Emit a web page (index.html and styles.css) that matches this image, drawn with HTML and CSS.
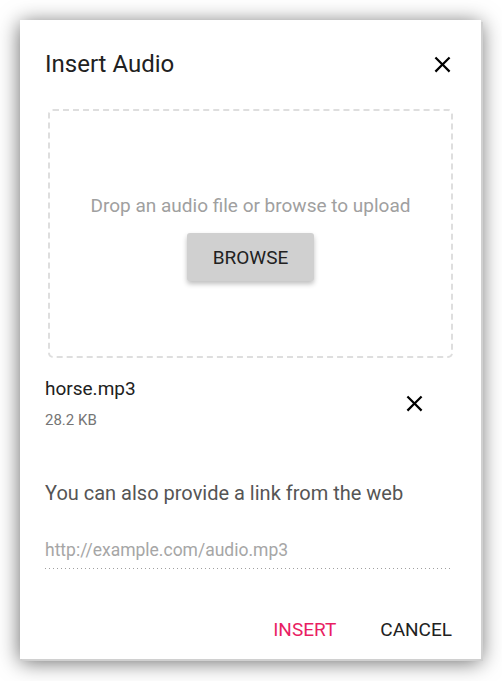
FILE: index.html
```html
<!DOCTYPE html>
<html>
<head>
<meta charset="utf-8">
<link rel="stylesheet" href="styles.css">
</head>
<body>
<div class="dialog">
  <div class="header">
    <h1 class="title">Insert Audio</h1>
    <button class="icon-btn close">
      <svg width="27" height="27" viewBox="0 0 24 24"><path d="M19 6.41L17.59 5 12 10.59 6.41 5 5 6.41 10.59 12 5 17.59 6.41 19 12 13.41 17.59 19 19 17.59 13.41 12z" fill="#000"/></svg>
    </button>
  </div>
  <div class="dropzone">
    <p class="drop-text">Drop an audio file or browse to upload</p>
    <button class="browse">BROWSE</button>
  </div>
  <div class="file-row">
    <div class="file-info">
      <div class="file-name">horse.mp3</div>
      <div class="file-size">28.2 KB</div>
    </div>
    <button class="icon-btn remove">
      <svg width="27" height="27" viewBox="0 0 24 24"><path d="M19 6.41L17.59 5 12 10.59 6.41 5 5 6.41 10.59 12 5 17.59 6.41 19 12 13.41 17.59 19 19 17.59 13.41 12z" fill="#000"/></svg>
    </button>
  </div>
  <p class="link-label">You can also provide a link from the web</p>
  <div class="url-field">http://example.com/audio.mp3</div>
  <div class="actions">
    <button class="text-btn insert">INSERT</button>
    <button class="text-btn cancel">CANCEL</button>
  </div>
</div>
</body>
</html>
```
FILE: styles.css
```css
html, body {
  margin: 0;
  padding: 0;
  background: #fff;
  font-family: Roboto, "Liberation Sans", sans-serif;
}
body {
  padding: 20px 0 0 20px;
  height: 681px;
  box-sizing: border-box;
  overflow: hidden;
}
.dialog {
  width: 461px;
  height: 639px;
  box-sizing: border-box;
  background: #fff;
  box-shadow: 2px 2px 0 #d0d0d0, 0 3px 20px rgba(0,0,0,0.6);
  padding: 0 28px 0 25px;
  display: flex;
  flex-direction: column;
}
.header {
  display: flex;
  align-items: center;
  justify-content: space-between;
  height: 89px;
  padding-bottom: 1px;
  box-sizing: border-box;
}
.title {
  margin: 0;
  font-size: 24px;
  font-weight: 400;
  color: #212121;
}
.icon-btn {
  border: 0;
  background: none;
  padding: 0;
  width: 27px;
  height: 27px;
  display: flex;
}
.close { margin-right: -3px; }
.dropzone {
  margin: 0 0 0 3px;
  height: 249px;
  box-sizing: border-box;
  border: 2px dashed #dedede;
  border-radius: 5px;
  display: flex;
  flex-direction: column;
  align-items: center;
  justify-content: center;
  padding-top: 8px;
}
.drop-text {
  margin: 0 0 16px;
  font-size: 19px;
  color: #a0a0a0;
}
.browse {
  border: 0;
  border-radius: 3px;
  background: #d0d0d0;
  font-family: inherit;
  font-size: 19px;
  color: #212121;
  width: 127px;
  height: 48px;
  box-shadow: 0 3px 5px rgba(0,0,0,0.25);
}
.file-row {
  display: flex;
  align-items: center;
  justify-content: space-between;
  margin-top: 19px;
  padding-right: 25px;
}
.file-name {
  font-size: 19px;
  color: #212121;
}
.file-size {
  margin-top: 11px;
  font-size: 15px;
  color: #757575;
}
.link-label {
  margin: 52px 0 0;
  font-size: 20px;
  color: #555;
}
.url-field {
  margin-top: 35px;
  font-size: 17.5px;
  color: #a6a6a6;
  padding-bottom: 9px;
  background-image: repeating-linear-gradient(to right, #a0a0a0 0 1px, transparent 1px 4px);
  background-size: 100% 1px;
  background-position: left bottom;
  background-repeat: no-repeat;
}
.actions {
  display: flex;
  justify-content: flex-end;
  gap: 44px;
  margin-top: 49px;
  margin-right: 1px;
}
.text-btn {
  border: 0;
  background: none;
  padding: 0;
  font-family: inherit;
  font-size: 19px;
}
.insert { color: #e91e63; }
.cancel { color: #212121; }
```
